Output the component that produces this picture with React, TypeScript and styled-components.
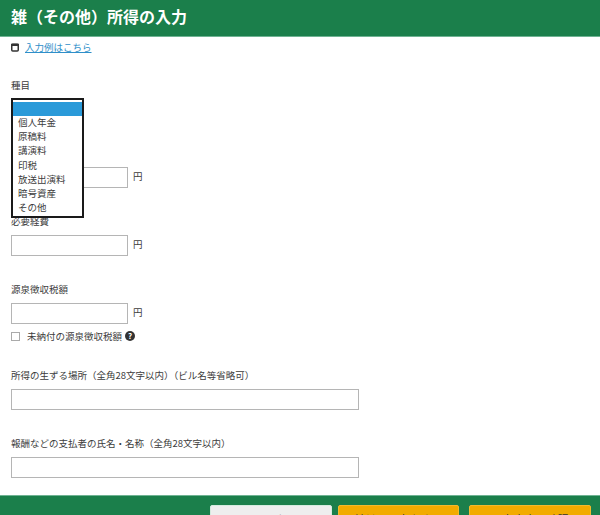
import React from 'react';
import styled, { createGlobalStyle } from 'styled-components';

const GlobalStyle = createGlobalStyle`
  html, body {
    margin: 0;
    padding: 0;
    height: 515px;
    overflow: hidden;
    background: #fff;
  }
  body {
    font-family: "Noto Sans CJK JP", "Noto Sans", sans-serif;
    color: #3c3c3c;
  }
`;

const Page = styled.div`
  width: 600px;
  height: 515px;
  display: flex;
  flex-direction: column;
  overflow: hidden;
`;

const Header = styled.header`
  height: 37px;
  flex: none;
  box-sizing: border-box;
  background: #1b7f4b;
  border-bottom: 1px solid #6fb393;
  display: flex;
  align-items: center;
  padding: 0 0 4px 11px;
  color: #fff;
  font-size: 16px;
  font-weight: 700;
`;

const Main = styled.main`
  flex: 1;
  position: relative;
  padding: 0 11px;
`;

const ExampleRow = styled.div`
  display: flex;
  align-items: center;
  gap: 6px;
  height: 20px;
  margin-bottom: 21px;
  font-size: 9.5px;
`;

const ExampleLink = styled.a`
  color: #2f8fc9;
  text-decoration: underline;
`;

const Label = styled.div`
  font-size: 9.5px;
  line-height: 14px;
  margin-bottom: 7px;
`;

const SelectSpace = styled.div`
  height: 68px;
`;

const Dropdown = styled.ul`
  position: absolute;
  left: 11px;
  top: 61px;
  width: 73px;
  height: 120px;
  margin: 0;
  padding: 2px 0 0;
  box-sizing: border-box;
  border: 2px solid #1a1a1a;
  background: #fff;
  list-style: none;
  z-index: 2;
`;

const Option = styled.li<{ $active?: boolean }>`
  height: 14.17px;
  line-height: 12px;
  padding-left: 5px;
  font-size: 9.5px;
  background: ${({ $active }) => ($active ? '#2a9ad9' : 'transparent')};
`;

const AmountRow = styled.div`
  display: flex;
  align-items: center;
  gap: 5px;
  font-size: 9.5px;
`;

const Unit = styled.span`
  margin-bottom: 3px;
`;

const TextBox = styled.div<{ $wide?: boolean }>`
  width: ${({ $wide }) => ($wide ? '348px' : '117px')};
  height: 21px;
  box-sizing: border-box;
  border: 1px solid #b5b5b5;
  background: #fff;
`;

const Field = styled.div<{ $gap: number }>`
  margin-bottom: ${({ $gap }) => $gap}px;
`;

const CheckRow = styled.div`
  display: flex;
  align-items: center;
  height: 16px;
  margin-top: 4px;
  font-size: 9.5px;
`;

const CheckBox = styled.span`
  width: 9px;
  height: 9px;
  box-sizing: border-box;
  border: 1px solid #aaa;
  margin-right: 7px;
`;

const Help = styled.span`
  width: 10px;
  height: 10px;
  margin-left: 3px;
  border-radius: 50%;
  background: #333;
  color: #fff;
  font-size: 8px;
  font-weight: 700;
  line-height: 10px;
  text-align: center;
`;

const Footer = styled.footer`
  height: 20px;
  flex: none;
  background: #1b7f4b;
  border-top: 1px solid #6fb393;
  display: flex;
  justify-content: flex-end;
  padding: 9px 9px 0 0;
  box-sizing: border-box;
  overflow: hidden;
`;

const FooterButton = styled.button<{ $primary?: boolean; $gap: number; $width: number }>`
  width: ${({ $width }) => $width}px;
  height: 32px;
  flex: none;
  margin-right: ${({ $gap }) => $gap}px;
  border: 1px solid ${({ $primary }) => ($primary ? '#f2b92e' : '#d5ebdf')};
  border-radius: 2px;
  padding: 0 0 5px;
  background: ${({ $primary }) => ($primary ? '#f2ab00' : '#eeeeee')};
  color: #333;
  font-family: inherit;
  font-size: 11px;
  line-height: 16px;
  display: block;
  text-align: center;
  box-sizing: border-box;
`;

const App: React.FC = () => {
  return (
    <Page>
      <GlobalStyle />
      <Header>雑（その他）所得の入力</Header>
      <Main>
        <ExampleRow>
          <svg width="8" height="9" viewBox="0 0 8 9">
            <rect x="0.75" y="1.5" width="6.5" height="6.5" rx="1" fill="#fff" stroke="#333" strokeWidth="1.5" />
            <rect x="0" y="0.5" width="8" height="2.5" rx="1" fill="#333" />
          </svg>
          <ExampleLink>入力例はこちら</ExampleLink>
        </ExampleRow>
        <Field $gap={26}>
          <Label>種目</Label>
          <SelectSpace />
          <AmountRow>
            <TextBox />
            <Unit>円</Unit>
          </AmountRow>
        </Field>
        <Dropdown>
          <Option $active>&nbsp;</Option>
          <Option>個人年金</Option>
          <Option>原稿料</Option>
          <Option>講演料</Option>
          <Option>印税</Option>
          <Option>放送出演料</Option>
          <Option>暗号資産</Option>
          <Option>その他</Option>
        </Dropdown>
        <Field $gap={26}>
          <Label>必要経費</Label>
          <AmountRow>
            <TextBox />
            <Unit>円</Unit>
          </AmountRow>
        </Field>
        <Field $gap={24}>
          <Label>源泉徴収税額</Label>
          <AmountRow>
            <TextBox />
            <Unit>円</Unit>
          </AmountRow>
          <CheckRow>
            <CheckBox />
            未納付の源泉徴収税額
            <Help>?</Help>
          </CheckRow>
        </Field>
        <Field $gap={26}>
          <Label>所得の生ずる場所（全角28文字以内）（ビル名等省略可）</Label>
          <TextBox $wide />
        </Field>
        <Field $gap={0}>
          <Label>報酬などの支払者の氏名・名称（全角28文字以内）</Label>
          <TextBox $wide />
        </Field>
      </Main>
      <Footer>
        <FooterButton $gap={6} $width={122}>キャンセル</FooterButton>
        <FooterButton $primary $gap={10} $width={121}>続けて入力をする</FooterButton>
        <FooterButton $primary $gap={0} $width={122}>入力内容の確認</FooterButton>
      </Footer>
    </Page>
  );
};

export default App;
